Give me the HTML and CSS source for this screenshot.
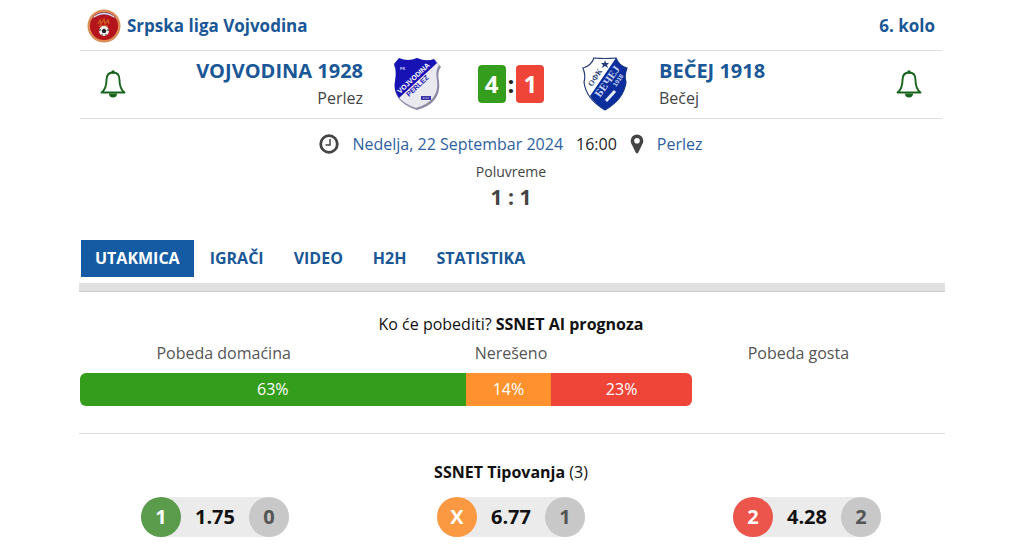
FILE: index.html
```html
<!DOCTYPE html>
<html lang="sr-Latn">
<head>
    <meta charset="UTF-8">
    <meta name="viewport" content="width=device-width, initial-scale=1.0">
    <title>Vojvodina 1928 - Bečej 1918</title>
    <link rel="stylesheet" href="styles.css">
</head>
<body>
    <main class="container">
        <header class="league">
            <a href="#liga" class="league-name">
                <svg class="league-logo" viewBox="0 0 34 34" aria-hidden="true">
                    <circle cx="17" cy="17" r="16.5" fill="#d98c55"/>
                    <circle cx="17" cy="17" r="14" fill="#b5141c"/>
                    <path d="M5 10a14 14 0 0 1 24 0Q17 1 5 10z" fill="#8d86b8"/>
                    <path d="M7 8Q17 1 27 8" fill="none" stroke="#eee" stroke-width="1"/>
                    <path d="M11 15l2-4 1 4 3-5 1 5 3-4 1 4M12 17h9" fill="none" stroke="#cf5a22" stroke-width="1.3"/>
                    <circle cx="17" cy="22" r="5" fill="#f3f0f0"/>
                    <path d="M17 19.5l2.4 1.8-.9 2.8h-3l-.9-2.8zM12.3 20.5l1.2-.6.3 1.4-1.5 1zM21.7 20.5l-1.2-.6-.3 1.4 1.5 1zM14 25.5l1.5-.6.5 1.6zM20 25.5l-1.5-.6-.5 1.6z" fill="#222"/>
                </svg>
                Srpska liga Vojvodina
            </a>
            <a href="#kolo">6. kolo</a>
        </header>

        <section class="match">
            <button class="bell" type="button" aria-label="Prati Vojvodina 1928">
                <svg viewBox="0 0 26 28" aria-hidden="true">
                    <path d="M13 2.500C8 2.500 6.500 6 6.500 10C6.500 15.500 5.500 19.500 1.500 22.500H24.500C20.500 19.500 19.500 15.500 19.500 10C19.500 6 18 2.500 13 2.500z" fill="none" stroke="#17641c" stroke-width="1.9" stroke-linejoin="round"/>
                    <circle cx="13" cy="2" r="1.700" fill="#17641c"/>
                    <path d="M9 23.500h8a4 4 0 0 1-8 0z" fill="#17641c"/>
                </svg>
            </button>
            <div class="team team-home">
                <a href="#domacin">VOJVODINA 1928</a>
                <span>Perlez</span>
            </div>
            <svg class="crest" viewBox="0 0 50 54" aria-hidden="true">
                <path d="M7 2Q16 6 25 1Q34 6 43 3L49 10Q45 15 47 24Q50 46 25 53Q0 45 3 25Q5 15 2 8z" fill="#8c89a3"/>
                <path d="M7 1Q16 5 25 1Q34 5 42 2L47 8Q43 14 45 23Q48 44 24 51Q0 43 3 24Q5 14 2 7z" fill="#e9e9ef"/>
                <path d="M7 1Q16 5 25 1Q34 5 42 2L45 6L7 41Q1 33 3 24Q5 14 2 7z" fill="#1712b4"/>
                <text x="8" y="13" class="crest-text" fill="#d5d5f2" font-size="4">FK</text>
                <text transform="translate(8 37) rotate(-43)" class="crest-text" fill="#fff" font-size="7">VOJVODINA</text>
                <text transform="translate(17 40) rotate(-43)" class="crest-text" fill="#1712b4" font-size="7">PERLEZ</text>
                <rect x="29" y="39" width="10" height="4" fill="#3a35a8"/>
                <path d="M31 41h6" stroke="#d5d5f2" stroke-width="1" stroke-dasharray="1 .6"/>
            </svg>
            <div class="score">
                <span class="goals win">4</span>
                <span>:</span>
                <span class="goals loss">1</span>
            </div>
            <svg class="crest" viewBox="0 0 50 54" aria-hidden="true">
                <path d="M14 1Q25 2 36 1Q39 9 47 11Q44 19 46 25Q44 42 25 53Q6 42 4 25Q6 19 3 11Q11 9 14 1z" fill="#fff" stroke="#263c78" stroke-width="1.200"/>
                <path d="M36 1L10 39Q15 47 25 53Q44 42 46 25Q44 19 47 11Q39 9 36 1z" fill="#0b2e9c"/>
                <path d="M25 3l1 3h3l-2 2 1 3-3-2-3 2 1-3-2-2h3z" fill="#263c78"/>
                <text transform="translate(12 30) rotate(-57)" class="crest-serif" fill="#263c78" font-size="8">ОФК</text>
                <text transform="translate(20 41) rotate(-55)" class="crest-serif" fill="#c9d3f2" font-size="11">БЕЧЕЈ</text>
                <text transform="translate(36 30) rotate(-55)" class="crest-text" fill="#c9d3f2" font-size="6">1918</text>
                <path d="M26 44l9-10" stroke="#e8ecf8" stroke-width="3"/>
            </svg>
            <div class="team">
                <a href="#gost">BEČEJ 1918</a>
                <span>Bečej</span>
            </div>
            <button class="bell" type="button" aria-label="Prati Bečej 1918">
                <svg viewBox="0 0 26 28" aria-hidden="true">
                    <path d="M13 2.500C8 2.500 6.500 6 6.500 10C6.500 15.500 5.500 19.500 1.500 22.500H24.500C20.500 19.500 19.500 15.500 19.500 10C19.500 6 18 2.500 13 2.500z" fill="none" stroke="#17641c" stroke-width="1.9" stroke-linejoin="round"/>
                    <circle cx="13" cy="2" r="1.700" fill="#17641c"/>
                    <path d="M9 23.500h8a4 4 0 0 1-8 0z" fill="#17641c"/>
                </svg>
            </button>
        </section>

        <section class="info">
            <div class="info-row">
                <svg class="clock" viewBox="0 0 20 20" aria-hidden="true">
                    <circle cx="10" cy="10" r="8.300" fill="none" stroke="#444" stroke-width="2.800"/>
                    <path d="M11 5v6H6.500" fill="none" stroke="#444" stroke-width="1.500"/>
                </svg>
                <a href="#datum">Nedelja, 22 Septembar 2024</a>
                <time>16:00</time>
                <svg class="pin" viewBox="0 0 14 20" aria-hidden="true">
                    <path d="M7 .5a6.300 6.300 0 0 1 6.300 6.300c0 2-1 3.400-1.700 5L8.300 18.500q-1.300 2-2.600 0L2.400 11.800C1.700 10.200.7 8.800.7 6.800A6.300 6.300 0 0 1 7 .5zM7 4a2.800 2.800 0 1 0 0 5.600A2.800 2.800 0 0 0 7 4z" fill="#444" fill-rule="evenodd"/>
                </svg>
                <a href="#mesto">Perlez</a>
            </div>
            <p class="half-label">Poluvreme</p>
            <p class="half-score">1 : 1</p>
        </section>

        <nav class="tabs">
            <a href="#utakmica" class="active">UTAKMICA</a>
            <a href="#igraci">IGRAČI</a>
            <a href="#video">VIDEO</a>
            <a href="#h2h">H2H</a>
            <a href="#statistika">STATISTIKA</a>
        </nav>

        <section class="forecast">
            <h2><span>Ko će pobediti?</span> SSNET AI prognoza</h2>
            <div class="forecast-labels">
                <span>Pobeda domaćina</span>
                <span>Nerešeno</span>
                <span>Pobeda gosta</span>
            </div>
            <div class="bar">
                <div class="win" style="width: 63%">63%</div>
                <div class="draw" style="width: 14%">14%</div>
                <div class="loss" style="width: 23%">23%</div>
            </div>
        </section>

        <section class="tips">
            <h2>SSNET Tipovanja <span>(3)</span></h2>
            <div class="tips-row">
                <button class="tip" type="button"><span class="circle home">1</span><span class="odds">1.75</span><span class="circle">0</span></button>
                <button class="tip" type="button"><span class="circle tie">X</span><span class="odds">6.77</span><span class="circle">1</span></button>
                <button class="tip" type="button"><span class="circle away">2</span><span class="odds">4.28</span><span class="circle">2</span></button>
            </div>
        </section>
    </main>
</body>
</html>
```
FILE: styles.css
```css
* {
    margin: 0;
    padding: 0;
    box-sizing: border-box;
}
body {
    font-family: "Open Sans", "Noto Sans", sans-serif;
    font-size: 16px;
    line-height: 24px;
    color: #222;
    background: #fff;
}
a {
    color: #1a5796;
    text-decoration: none;
}
button {
    font: inherit;
    border: 0;
    background: none;
    cursor: pointer;
}
h2 {
    font-size: 16px;
    text-align: center;
    color: #111;
}
h2 span {
    font-weight: normal;
}
.container {
    max-width: 866px;
    margin: 0 auto;
}
.league {
    display: flex;
    justify-content: space-between;
    align-items: center;
    margin: 0 3px 0 1px;
    padding: 9px 7px 7px;
    border-bottom: 1px solid #ddd;
    font-size: 17px;
    font-weight: bold;
}
.league-name {
    display: flex;
    align-items: center;
    gap: 6px;
}
.league-logo {
    width: 34px;
    height: 34px;
}
.match {
    display: grid;
    grid-template-columns: 66px 1fr 108px 80px 108px 1fr 66px;
    align-items: center;
    justify-items: center;
    margin: 0 3px 0 1px;
    padding: 5px 0 6px;
    border-bottom: 1px solid #ddd;
}
.bell svg {
    display: block;
    width: 26px;
    height: 28px;
}
.team {
    display: flex;
    flex-direction: column;
    justify-self: start;
    padding-bottom: 2px;
    color: #444;
}
.team a {
    font-size: 20px;
    font-weight: bold;
    line-height: 30px;
}
.team-home {
    justify-self: end;
    text-align: right;
}
.crest {
    width: 50px;
    height: 54px;
}
.crest-text {
    font-family: "Liberation Sans", sans-serif;
    font-weight: bold;
}
.crest-serif {
    font-family: "Liberation Serif", serif;
    font-weight: bold;
}
.score {
    display: flex;
    align-items: center;
    gap: 2px;
    font-size: 24px;
    font-weight: bold;
    line-height: 38px;
}
.goals {
    width: 28px;
    border-radius: 4px;
    text-align: center;
    color: #fff;
}
.win {
    background: #349d1c;
}
.draw {
    background: #ff922e;
}
.loss {
    background: #ef4438;
}
.info {
    padding: 13px 2px 34px 0;
    text-align: center;
    color: #444;
}
.info-row {
    display: flex;
    justify-content: center;
    align-items: center;
    gap: 13px;
}
.info-row a {
    color: #2f5f9f;
}
.info-row time {
    color: #222;
}
.clock {
    width: 20px;
    height: 20px;
}
.pin {
    width: 14px;
    height: 20px;
}
.half-label {
    font-size: 14px;
    line-height: 32px;
}
.half-score {
    font-size: 21px;
    font-weight: bold;
    line-height: 18px;
}
.tabs {
    display: flex;
    gap: 2px;
    padding: 0 2px 6px;
    margin-bottom: 21px;
    border-bottom: 8px solid #e1e1e1;
    box-shadow: 0 1px #ccc;
}
.tabs a {
    padding: 0 14px;
    font-weight: bold;
    line-height: 37px;
}
.tabs a.active {
    background: #155ba3;
    color: #fff;
}
.forecast {
    padding: 0 3px 27px 1px;
}
.forecast-labels {
    display: grid;
    grid-template-columns: repeat(3, 1fr);
    padding: 5px 0 8px;
    text-align: center;
    color: #555;
}
.bar {
    display: flex;
    width: 71%;
    border-radius: 6px;
    overflow: hidden;
    text-align: center;
    line-height: 33px;
    color: #fff;
}
.tips {
    padding: 26px 2px 6px 0;
    border-top: 1px solid #ddd;
}
.tips-row {
    display: grid;
    grid-template-columns: repeat(3, 1fr);
    justify-items: center;
    margin: 13px -12px 0;
}
.tip {
    display: flex;
    justify-content: space-between;
    align-items: center;
    width: 148px;
    border-radius: 20px;
    background: #ebebeb;
    font-weight: bold;
    font-size: 20px;
    line-height: 40px;
}
.odds {
    color: #111;
}
.circle {
    width: 40px;
    border-radius: 50%;
    background: #c8c8c8;
    color: #555;
}
.home,
.tie,
.away {
    color: #fff;
}
.home {
    background: #5a9b4c;
}
.tie {
    background: #fb9942;
}
.away {
    background: #eb554b;
}
```
